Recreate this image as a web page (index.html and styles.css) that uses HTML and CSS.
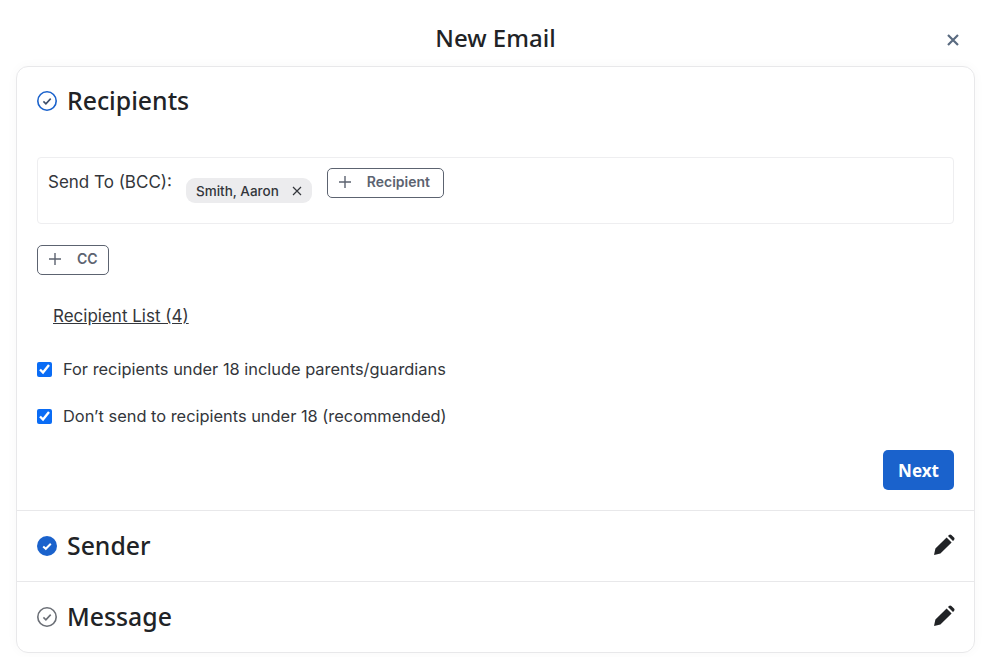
FILE: index.html
```html
<!DOCTYPE html>
<html lang="en">
<head>
  <meta charset="UTF-8" />
  <meta name="viewport" content="width=device-width, initial-scale=1.0" />
  <title>New Email</title>
  <link rel="stylesheet" href="styles.css">
</head>
<body>
  <div class="modal">
    <div class="modal-header">
      <h1>New Email</h1>
      <button class="close" aria-label="Close">
        <svg width="14" height="14" viewBox="0 0 14 14"><path d="M2 2l10 10M12 2L2 12" fill="none" stroke="#5a6b80" stroke-width="2.2"/></svg>
      </button>
    </div>

    <div class="card">
      <section class="step step-open">
        <div class="step-title">
          <svg class="step-icon" width="20" height="20" viewBox="0 0 20 20"><circle cx="10" cy="10" r="9.2" fill="none" stroke="#1a62cc" stroke-width="1.6"/><path d="M6.4 10.4l2.5 2.4 4.8-5.2" fill="none" stroke="#3d4f6b" stroke-width="1.6"/></svg>
          <h2>Recipients</h2>
        </div>

        <div class="send-box">
          <span class="send-label">Send To (BCC):</span>
          <span class="chip">Smith, Aaron
            <svg width="10" height="10" viewBox="0 0 10 10"><path d="M1 1l8 8M9 1L1 9" fill="none" stroke="#33363b" stroke-width="1.2"/></svg>
          </span>
          <button class="add-btn add-recipient">
            <svg width="14" height="14" viewBox="0 0 14 14"><path d="M7 1v12M1 7h12" fill="none" stroke="#5c6370" stroke-width="1.4"/></svg>
            Recipient
          </button>
        </div>

        <button class="add-btn add-cc">
          <svg width="14" height="14" viewBox="0 0 14 14"><path d="M7 1v12M1 7h12" fill="none" stroke="#5c6370" stroke-width="1.4"/></svg>
          CC
        </button>

        <a class="recipient-list" href="#">Recipient List (4)</a>

        <label class="check"><input type="checkbox" checked> For recipients under 18 include parents/guardians</label>
        <label class="check"><input type="checkbox" checked> Don’t send to recipients under 18 (recommended)</label>

        <div class="actions">
          <button class="next">Next</button>
        </div>
      </section>

      <section class="step step-closed">
        <div class="step-title">
          <svg class="step-icon" width="20" height="20" viewBox="0 0 20 20"><circle cx="10" cy="10" r="10" fill="#1a62cc"/><path d="M6.2 10.4l2.6 2.4 5-5" fill="none" stroke="#fff" stroke-width="2"/></svg>
          <h2>Sender</h2>
        </div>
        <svg class="pencil" width="22" height="22" viewBox="0 0 22 22"><path d="M1 21l1.4-6.4L13.6 3.4l5 5L7.4 19.6z M15 2l1-1a1.8 1.8 0 0 1 2.4 0l2.6 2.6a1.8 1.8 0 0 1 0 2.4l-1 1z" fill="#212326"/></svg>
      </section>

      <section class="step step-closed">
        <div class="step-title">
          <svg class="step-icon" width="20" height="20" viewBox="0 0 20 20"><circle cx="10" cy="10" r="9.2" fill="none" stroke="#6b6f76" stroke-width="1.6"/><path d="M6.4 10.4l2.5 2.4 4.8-5.2" fill="none" stroke="#6b6f76" stroke-width="1.6"/></svg>
          <h2>Message</h2>
        </div>
        <svg class="pencil" width="22" height="22" viewBox="0 0 22 22"><path d="M1 21l1.4-6.4L13.6 3.4l5 5L7.4 19.6z M15 2l1-1a1.8 1.8 0 0 1 2.4 0l2.6 2.6a1.8 1.8 0 0 1 0 2.4l-1 1z" fill="#212326"/></svg>
      </section>
    </div>
  </div>
</body>
</html>
```

FILE: styles.css
```css
html, body { height: 100%; }
body { margin: 0; background: #fff; color: #212326; font-family: Inter, sans-serif; overflow: hidden; }
h1, h2 { margin: 0; font-family: "Noto Sans", sans-serif; font-weight: 500; }
button { font-family: inherit; cursor: pointer; }

.modal { padding: 0 19px 0 16px; }
.modal-header { height: 66px; display: flex; align-items: center; justify-content: center; position: relative; }
.modal-header h1 { font-size: 24px; line-height: 32px; margin-top: 10px; }
.close { position: absolute; right: 15px; top: 33px; padding: 0; border: none; background: none; display: flex; }

.card { border: 1px solid #e8e8ea; border-radius: 12px; box-shadow: 0 0 12px rgba(0,0,0,0.03); }
.step-title { display: flex; align-items: center; gap: 10px; }
.step-title h2 { font-size: 24.8px; line-height: 32px; padding-bottom: 2px; }
.step-icon { flex: none; }

.step-open { padding: 17px 20px 20px 20px; border-bottom: 1px solid #e8e8ea; }
.step-closed { height: 70px; box-sizing: border-box; padding: 0 19px 0 20px; display: flex; align-items: center; justify-content: space-between; }
.step-closed + .step-closed { border-top: 1px solid #e8e8ea; height: 71px; }
.pencil { margin-bottom: 2px; }

.send-box { margin-top: 39px; height: 67px; box-sizing: border-box; border: 1px solid #eeeef0; border-radius: 4px; padding: 10px; display: flex; align-items: flex-start; }
.send-label { font-size: 17px; line-height: 28px; color: #33363b; }
.chip { margin: 10px 15px 0 14px; height: 25px; box-sizing: border-box; padding: 0 10px; border-radius: 9px; background: #ececee; display: inline-flex; align-items: center; gap: 13px; font-size: 13.5px; font-weight: 500; color: #33363b; }

.add-btn { height: 30px; box-sizing: border-box; border: 1px solid #5c6370; border-radius: 5px; background: #fff; padding: 0 10px 3px; display: flex; align-items: center; gap: 15px; font-size: 14px; font-weight: 600; color: #5c6370; }
.add-recipient { padding-right: 13px; }
.add-cc { margin-top: 21px; }
.recipient-list { display: block; margin: 30px 0 0 16px; font-size: 17px; line-height: 22px; color: #33363b; width: max-content; }

.check { display: flex; align-items: center; font-size: 16.4px; line-height: 22px; color: #33363b; margin-top: 31px; }
.check + .check { margin-top: 25px; }
.check input { margin: 0 11px 0 0; width: 15px; height: 15px; accent-color: #0a6cf5; }

.actions { display: flex; justify-content: flex-end; margin-top: 23px; }
.next { width: 71px; height: 40px; border: none; border-radius: 5px; background: #1a62cc; color: #fff; font-family: "Noto Sans", sans-serif; font-size: 17px; font-weight: 700; }
```
